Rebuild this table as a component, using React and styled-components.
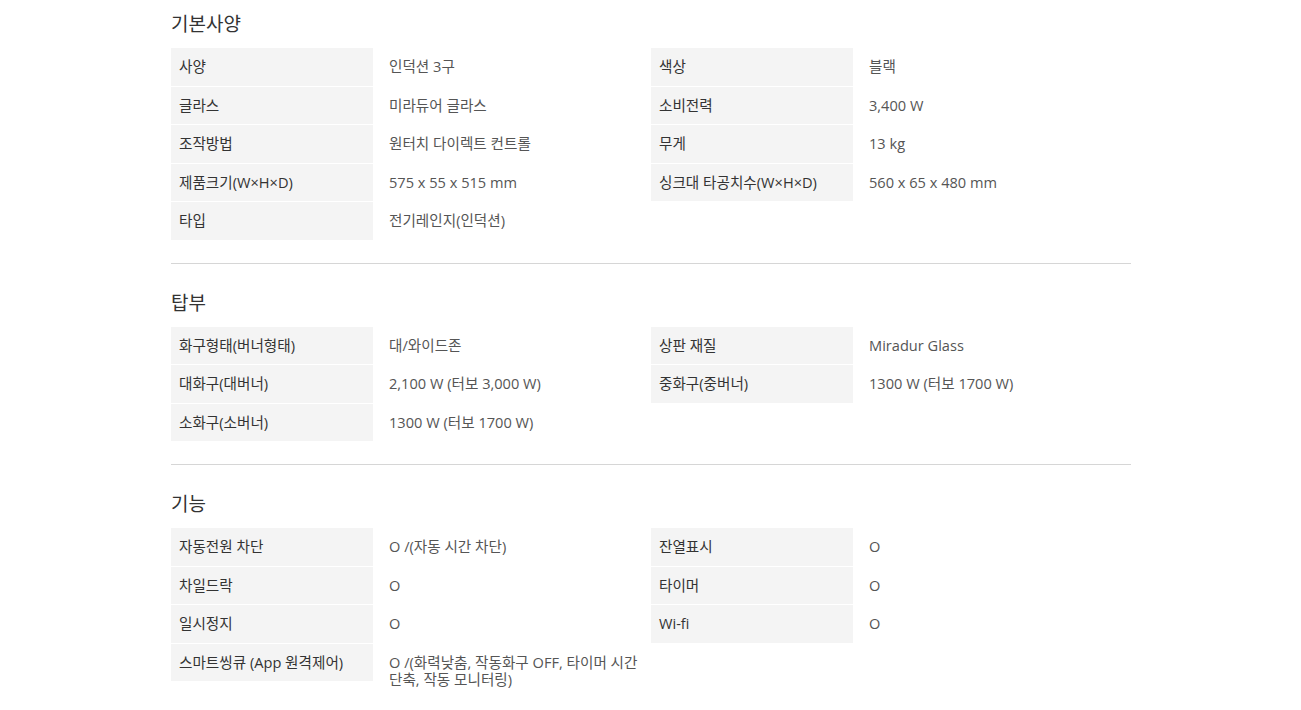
import React from 'react';
import styled, { createGlobalStyle } from 'styled-components';

const sections = [
  {
    title: '기본사양',
    rows: [
      [['사양', '인덕션 3구'], ['색상', '블랙']],
      [['글라스', '미라듀어 글라스'], ['소비전력', '3,400 W']],
      [['조작방법', '원터치 다이렉트 컨트롤'], ['무게', '13 kg']],
      [['제품크기(W×H×D)', '575 x 55 x 515 mm'], ['싱크대 타공치수(W×H×D)', '560 x 65 x 480 mm']],
      [['타입', '전기레인지(인덕션)']],
    ],
  },
  {
    title: '탑부',
    rows: [
      [['화구형태(버너형태)', '대/와이드존'], ['상판 재질', 'Miradur Glass']],
      [['대화구(대버너)', '2,100 W (터보 3,000 W)'], ['중화구(중버너)', '1300 W (터보 1700 W)']],
      [['소화구(소버너)', '1300 W (터보 1700 W)']],
    ],
  },
  {
    title: '기능',
    rows: [
      [['자동전원 차단', 'O /(자동 시간 차단)'], ['잔열표시', 'O']],
      [['차일드락', 'O'], ['타이머', 'O']],
      [['일시정지', 'O'], ['Wi-fi', 'O']],
      [['스마트씽큐 (App 원격제어)', 'O /(화력낮춤, 작동화구 OFF, 타이머 시간 단축, 작동 모니터링)']],
    ],
  },
];

function SpecPage() {
  return (
    <>
      <GlobalStyle />
      <Container>
        {sections.map((section, i) => (
          <Section key={section.title} $last={i === sections.length - 1}>
            <SectionTitle>{section.title}</SectionTitle>
            <Table>
              {section.rows.map((row, r) => (
                <Row key={r}>
                  {row.map(([label, value]) => (
                    <React.Fragment key={label}>
                      <Label>{label}</Label>
                      <Value>{value}</Value>
                    </React.Fragment>
                  ))}
                </Row>
              ))}
            </Table>
          </Section>
        ))}
      </Container>
    </>
  );
}

const GlobalStyle = createGlobalStyle`
  body {
    margin: 0;
    background: #fff;
    font-family: "Open Sans", "Noto Sans CJK KR", sans-serif;
  }
`;

const Container = styled.div`
  width: 960px;
  margin-left: 171px;
  padding-top: 11px;
`;

const Section = styled.section`
  padding-bottom: ${p => (p.$last ? '0' : '23px')};
  margin-bottom: ${p => (p.$last ? '0' : '26px')};
  border-bottom: ${p => (p.$last ? 'none' : '1px solid #d6d6d6')};
`;

const SectionTitle = styled.h2`
  margin: 0 0 11px;
  font-size: 19px;
  line-height: 26px;
  font-weight: normal;
  color: #333;
`;

const Table = styled.div`
  display: flex;
  flex-direction: column;
  gap: 1px;
`;

const Row = styled.div`
  display: grid;
  grid-template-columns: 202px 278px 202px 278px;
  align-items: start;
`;

const Label = styled.div`
  height: 37.5px;
  box-sizing: border-box;
  padding: 9px 8px 0;
  background: #f4f4f4;
  font-size: 14.6px;
  line-height: 19px;
  color: #333;
  white-space: nowrap;
`;

const Value = styled.div`
  padding: 10px 0 0 16px;
  font-size: 14.6px;
  line-height: 17px;
  color: #555;
  word-break: keep-all;
`;

export default SpecPage;
